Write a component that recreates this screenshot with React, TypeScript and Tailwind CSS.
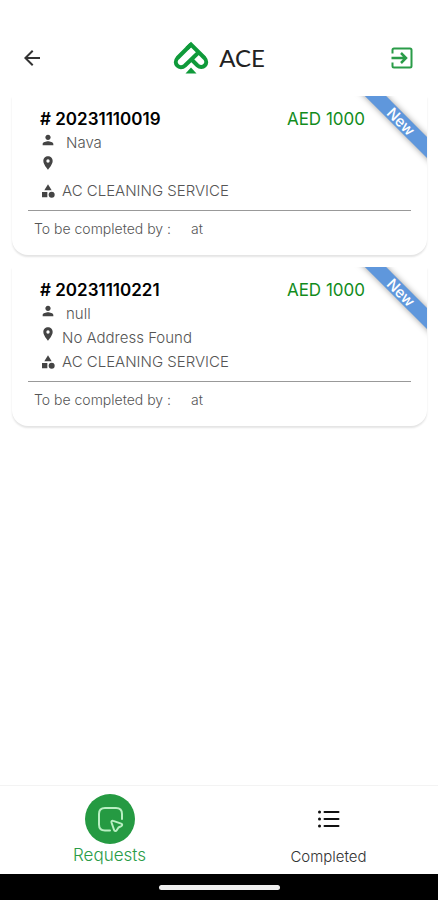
import { MdArrowBack, MdCategory, MdPerson, MdPlace } from 'react-icons/md';

const requests = [
    { id: '20231110019', price: 'AED 1000', name: 'Nava', address: '', service: 'AC CLEANING SERVICE' },
    { id: '20231110221', price: 'AED 1000', name: 'null', address: 'No Address Found', service: 'AC CLEANING SERVICE' },
];

function Logo() {
    return (
        <svg className="h-9 w-9" viewBox="0 0 36 36" fill="none" stroke="#0f9a3a" strokeWidth="4" strokeLinejoin="miter">
            <path d="M14 8.500L18 4.500L31.500 18C36.500 23.500 29.500 30 24.500 25.500L19 20" />
            <path d="M18 4.500L4.500 18C-.5 23.500 6.500 30.500 12 25.500L25.500 12.500" />
            <path d="M18 27.500L23.500 33.500H12.500Z" fill="#0f9a3a" stroke="none" />
        </svg>
    );
}

function ExitIcon() {
    return (
        <svg className="h-6 w-6" viewBox="0 0 24 24" fill="none" stroke="#2a9c48" strokeWidth="2">
            <path d="M2.500 7.500V4a1.500 1.500 0 0 1 1.500-1.500h16A1.500 1.500 0 0 1 21.500 4v16a1.500 1.500 0 0 1-1.500 1.500H4A1.500 1.500 0 0 1 2.500 20v-3.500" />
            <path d="M1.500 12H15M11 7l5 5-5 5" strokeWidth="2.500" />
        </svg>
    );
}

function RequestCard({ request }: any) {
    return (
        <article className="relative overflow-hidden rounded-b-2xl bg-white shadow-[0_2px_2px_0_#e4e4e4]">
            {/* Corner ribbon */}
            <div className="absolute top-[18px] -right-[34px] w-[120px] rotate-45 bg-[#5f97dc] text-center text-[15px] leading-[15px] font-medium text-white shadow-[0_0_6px_#00000066]">
                New
            </div>

            <div className="pt-[11px] pr-[62px] pl-7">
                <div className="flex items-center justify-between leading-6">
                    <h2 className="text-[17px] font-semibold text-black"># {request.id}</h2>
                    <p className="text-[17px] font-normal text-[#128c1c]">{request.price}</p>
                </div>
                <div className="flex h-6 gap-2.5 leading-6">
                    <MdPerson className="h-[18px] w-4 shrink-0 text-[#444]" />
                    <p>{request.name}</p>
                </div>
                <div className="flex h-6 gap-1.5 leading-6">
                    <MdPlace className="h-4 w-4 shrink-0 text-[#444]" />
                    <p>{request.address}</p>
                </div>
                <div className="flex h-6 items-center gap-1.5 leading-6">
                    <MdCategory className="h-4 w-4 shrink-0 text-[#444]" />
                    <p>{request.service}</p>
                </div>
            </div>

            <hr className="mx-4 mt-[7px] border-[#999]" />
            <div className="flex gap-5 px-[22px] pt-2 pb-4 text-[14px] leading-5">
                <span>To be completed by :</span>
                <span>at</span>
            </div>
        </article>
    );
}

export default function App() {
    return (
        <div className="flex min-h-screen flex-col bg-white font-['Inter','Liberation_Sans',sans-serif] text-[15px] font-light text-[#555]">
            <header className="flex h-24 items-center justify-between px-6 pt-5">
                <button type="button" aria-label="Back" className="-ml-1 text-[#333]">
                    <MdArrowBack className="h-6 w-6" />
                </button>
                <div className="flex items-center gap-2.5 pl-1">
                    <Logo />
                    <h1 className="font-['Lato','Liberation_Sans',sans-serif] text-[24px] leading-8 font-normal text-[#222]">ACE</h1>
                </div>
                <button type="button" aria-label="Sign out">
                    <ExitIcon />
                </button>
            </header>

            <main className="flex flex-1 flex-col gap-3 pr-[11px] pl-3">
                {requests.map((request) => (
                    <RequestCard key={request.id} request={request} />
                ))}
            </main>

            <nav className="grid grid-cols-2 border-t border-[#f3f3f3]">
                <button type="button" className="flex flex-col items-center pt-2 pb-1.5 text-[#2a9c48]">
                    <span className="flex h-[50px] w-[50px] items-center justify-center rounded-full bg-[#259a42]">
                        <svg className="h-7 w-7" viewBox="0 0 28 28" fill="none" stroke="#b9efc2" strokeWidth="2" strokeLinecap="round" strokeLinejoin="round">
                            <path d="M14 25.500H9c-4 0-6-2-6-6V9c0-4 2-6 6-6h11c4 0 6 2 6 6v5" />
                            <path d="M15.500 17.500c-.3-1.200.6-2 1.700-1.600l8 2.700c1.300.5 1.300 2 .1 2.600l-2.800 1.300-1.800 2.800c-.7 1.100-2.200 1-2.600-.3Z" />
                        </svg>
                    </span>
                    <span className="text-[17px] leading-[22px]">Requests</span>
                </button>
                <button type="button" className="flex flex-col items-center pt-2 pb-1.5 text-[#333]">
                    <span className="flex h-[50px] items-center">
                        <svg className="h-6 w-6" viewBox="0 0 24 24" fill="none" stroke="#111" strokeWidth="2" strokeLinecap="round">
                            <path d="M7.500 5H21.500M7.500 12H21.500M7.500 19H21.500" />
                            <path d="M2.500 5h.01M2.500 12h.01M2.500 19h.01" strokeWidth="3" />
                        </svg>
                    </span>
                    <span className="pt-0.5 text-[15px] leading-[22px]">Completed</span>
                </button>
            </nav>

            {/* System gesture bar */}
            <div className="flex h-[26px] items-center justify-center bg-black">
                <div className="h-[5px] w-[121px] rounded-full bg-[#eee]" />
            </div>
        </div>
    );
}
